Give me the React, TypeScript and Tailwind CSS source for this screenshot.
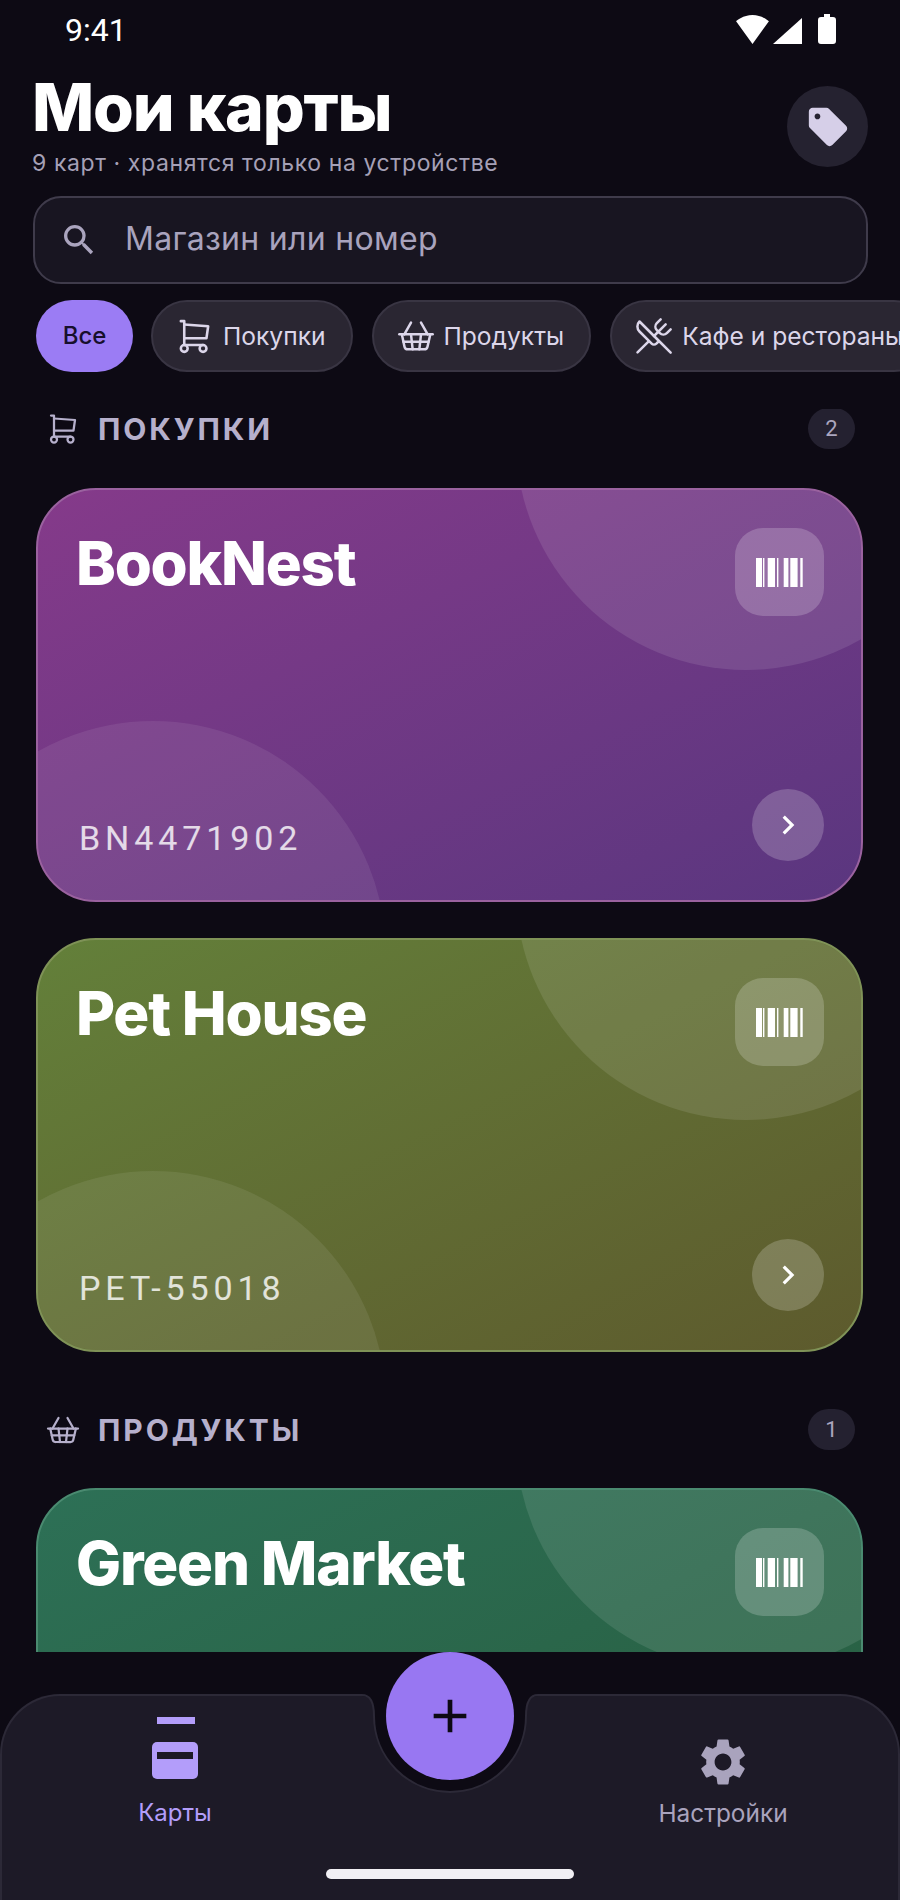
import React from "react";
import { MdSearch, MdSell, MdSettings, MdChevronRight, MdAdd } from "react-icons/md";
import { TbShoppingCart } from "react-icons/tb";
import { ShoppingBasket, UtensilsCrossed } from "lucide-react";

const bars: [number, number][] = [[0,6],[7,1.4],[11.7,7.3],[21,1.4],[27.7,4.7],[34.3,7.3],[44.3,2.4]];

function Barcode() {
  return (
    <svg width="47" height="29" viewBox="0 0 47 29" fill="white">
      {bars.map(([x, w], i) => (<rect key={i} x={x} y="0" width={w} height="29" />))}
    </svg>
  );
}

function Card({ name, num, from, to, border }: { name: string; num?: string; from: string; to: string; border: string }) {
  return (
    <div className={`relative h-[414px] w-[827px] shrink-0 overflow-hidden rounded-[60px] border-2 ${border} ${from} ${to} bg-gradient-to-br`}>
      <div className="absolute left-[478px] top-[-280px] h-[460px] w-[460px] rounded-full bg-white/[0.1]" />
      <div className="absolute left-[-118px] top-[231px] h-[466px] w-[466px] rounded-full bg-white/[0.08]" />
      <div className="relative flex h-full flex-col justify-between pb-[39px] pl-[38px] pr-[37px] pt-[38px]">
        <div className="flex items-start justify-between">
          <span className="text-[60px] font-extrabold leading-[70px] tracking-[-1.2px] text-white">{name}</span>
          <div className="flex h-[88px] w-[89px] items-center justify-center rounded-[28px] bg-white/[0.2]">
            <Barcode />
          </div>
        </div>
        <div className="flex items-end justify-between">
          <span className="mb-[3px] ml-[3px] font-['Roboto',sans-serif] text-[34px] leading-[40px] tracking-[4.9px] text-white/80">{num}</span>
          <div className="flex h-[72px] w-[72px] items-center justify-center rounded-full bg-white/[0.2]">
            <MdChevronRight size={38} color="white" />
          </div>
        </div>
      </div>
    </div>
  );
}

function Section({ icon, title, count }: { icon: React.ReactNode; title: string; count: string }) {
  return (
    <div className="flex h-[41px] items-center justify-between pl-[9px] pr-[9px]">
      <div className="flex items-center gap-[17px] text-[#b6b0cc]">
        <span className="flex w-[36px] justify-center">{icon}</span>
        <span className="text-[30px] font-bold leading-[36px] tracking-[2.9px]">{title}</span>
      </div>
      <span className="flex h-[41px] w-[47px] items-center justify-center rounded-full bg-[#242130] font-['Roboto',sans-serif] text-[22px] text-[#aba6bf]">{count}</span>
    </div>
  );
}

function Chip({ icon, label }: { icon: React.ReactNode; label: string }) {
  return (
    <div className="flex h-[72px] shrink-0 items-center gap-[8px] rounded-full border-2 border-[#393543] bg-[#2a2632] pl-[22px] pr-[25px] text-[24.6px] text-[#dcd6ea]">
      {icon}
      <span className="whitespace-nowrap">{label}</span>
    </div>
  );
}

export default function App() {
  return (
    <div className="relative flex h-[1900px] w-[900px] flex-col overflow-hidden bg-[#0d0a14] font-['Inter',sans-serif]">
      <div className="flex h-[62px] shrink-0 items-start justify-between pl-[65px] pr-[64px] pt-[15px]">
        <span className="font-['Roboto',sans-serif] text-[32px] leading-[30px] text-white">9:41</span>
        <div className="-mt-[1px] flex items-end text-white">
          <svg width="33" height="29" viewBox="0.3 3 23.4 18.5" preserveAspectRatio="none" fill="white">
            <path d="M12.01 21.49L23.64 7c-.45-.34-4.93-4-11.64-4C5.28 3 .81 6.66.36 7l11.64 14.5.01-.01z" />
          </svg>
          <svg className="ml-[4px]" width="29" height="26" viewBox="0 0 29 26" fill="white">
            <path d="M0 26H29V0z" />
          </svg>
          <svg className="ml-[16px]" width="18" height="30" viewBox="0 0 18 30" fill="white">
            <path d="M6 0h6v3h3a3 3 0 0 1 3 3v21a3 3 0 0 1-3 3H3a3 3 0 0 1-3-3V6a3 3 0 0 1 3-3h3z" />
          </svg>
        </div>
      </div>

      <div className="flex h-[134px] shrink-0 items-start justify-between pl-[32px] pr-[32px]">
        <div className="pt-[10px]">
          <div className="text-[66px] font-extrabold leading-[70px] tracking-[-1.2px] text-white">Мои карты</div>
          <div className="mt-[7px] text-[23px] leading-[28px] tracking-[0.6px] text-[#a5a0b6]">9 карт · хранятся только на устройстве</div>
        </div>
        <div className="mt-[24px] flex h-[81px] w-[81px] items-center justify-center rounded-full bg-[#252230]">
          <MdSell size={46} color="#d6cfe8" />
        </div>
      </div>

      <div className="ml-[33px] mr-[32px] flex h-[88px] shrink-0 items-center gap-[26px] rounded-[28px] border-2 border-[#3f3b4b] bg-[#181521] pl-[24px]">
        <MdSearch size={40} color="#aaa4be" />
        <span className="pb-[3px] text-[32px] leading-[40px] tracking-[0.3px] text-[#a9a3bd]">Магазин или номер</span>
      </div>

      <div className="mt-[16px] flex shrink-0 gap-[19px] overflow-hidden pl-[36px]">
        <div className="-mr-[1px] flex h-[72px] w-[97px] shrink-0 items-center justify-center rounded-full bg-[#9b7cf4] text-[24px] font-medium text-[#170f2c]">Все</div>
        <Chip icon={<TbShoppingCart size={41} strokeWidth={1.5} className="-ml-[1px]" />} label="Покупки" />
        <Chip icon={<ShoppingBasket size={40} strokeWidth={1.5} />} label="Продукты" />
        <Chip icon={<UtensilsCrossed size={40} strokeWidth={1.5} />} label="Кафе и рестораны" />
      </div>

      <div className="mt-[37px] flex h-[1243px] shrink-0 flex-col overflow-hidden pl-[36px] pr-[36px]">
        <div className="mt-[-1px]">
          <Section icon={<TbShoppingCart size={50} strokeWidth={1.5} />} title="ПОКУПКИ" count="2" />
        </div>
        <div className="mt-[39px] flex flex-col gap-[36px]">
          <Card name="BookNest" num="BN4471902" from="from-[#853a8a]" to="to-[#5a367f]" border="border-[#9a629f]" />
          <Card name="Pet House" num="PET-55018" from="from-[#63803a]" to="to-[#5d5a2d]" border="border-[#7f9257]" />
        </div>
        <div className="mt-[57px]">
          <Section icon={<ShoppingBasket size={40} strokeWidth={1.5} />} title="ПРОДУКТЫ" count="1" />
        </div>
        <div className="mt-[38px]">
          <Card name="Green Market" num="" from="from-[#2d7056]" to="to-[#275c3e]" border="border-[#4a8a70]" />
        </div>
      </div>

      <div className="relative mt-[42px] h-[206px] shrink-0 rounded-t-[60px] border-2 border-b-0 border-[#2c2937] bg-[#1d1a27]">
        <div className="grid h-full grid-cols-[346px_1fr_350px]">
          <div className="flex flex-col items-center pt-[21px] text-[#b39dfa]">
            <svg width="46" height="62" viewBox="0 0 46 62" fill="#b39dfa">
              <rect x="5" y="0" width="38" height="7" />
              <rect x="0" y="25" width="46" height="37" rx="5" />
              <rect x="5" y="35" width="36" height="7" fill="#1d1a27" />
            </svg>
            <span className="mt-[19px] text-[24px] leading-[30px]">Карты</span>
          </div>
          <div />
          <div className="flex flex-col items-center pt-[38px] text-[#a9a3bd]">
            <MdSettings size={56} />
            <span className="mt-[8px] text-[24.4px] leading-[30px]">Настройки</span>
          </div>
        </div>
        <div className="absolute bottom-[21px] left-[324px] h-[10px] w-[248px] rounded-full bg-[#f1eff4]" />
        <svg className="absolute left-[356px] top-[-2px]" width="184" height="110" viewBox="0 0 184 110">
          <path d="M0 0H184V2H180C172 2 168 8 168 22A76 76 0 0 1 16 22C16 8 12 2 4 2H0Z" fill="#0d0a14" />
          <path d="M0 1H4C12 1 16 8 16 22A76 76 0 0 0 168 22C168 8 172 1 180 1H184" fill="none" stroke="#2c2937" strokeWidth="2" />
        </svg>
      </div>

      <div className="absolute left-[386px] top-[1652px] flex h-[128px] w-[128px] items-center justify-center rounded-full bg-[#9877f2]">
        <MdAdd size={56} color="#0d0a14" />
      </div>
    </div>
  );
}
